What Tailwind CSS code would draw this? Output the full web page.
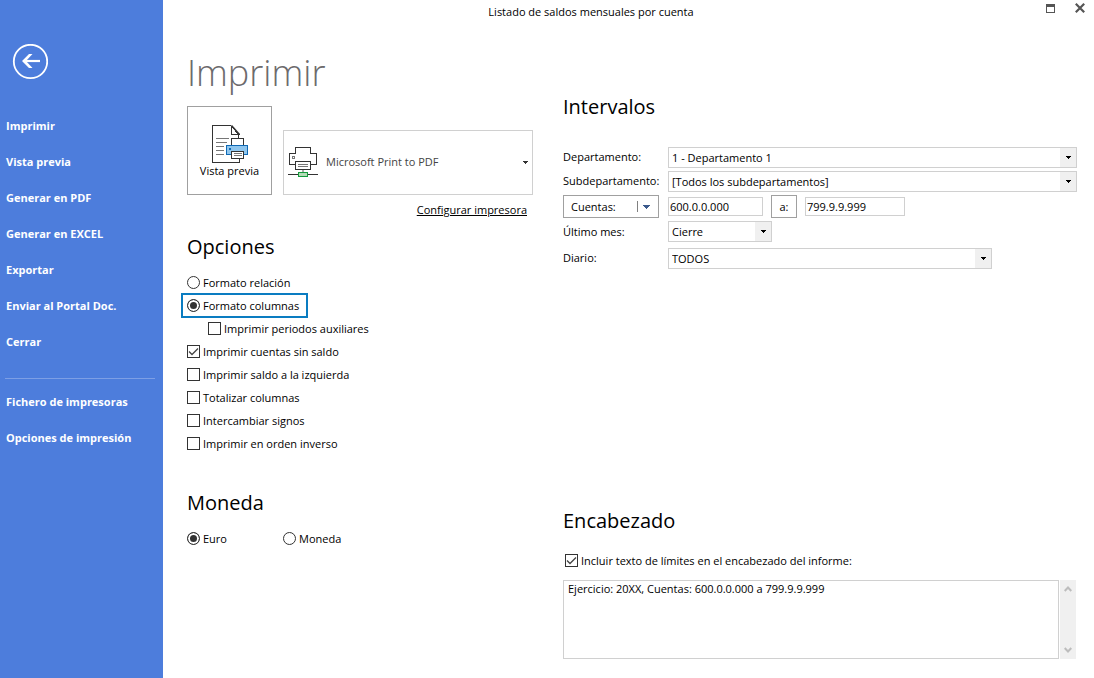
<!DOCTYPE html>
<html lang="es">
<head>
<meta charset="utf-8">
<meta name="viewport" content="width=device-width, initial-scale=1">
<title>Listado de saldos mensuales por cuenta</title>
<script src="https://cdn.jsdelivr.net/npm/@tailwindcss/browser@4"></script>
</head>
<body class="flex min-h-screen bg-white font-['Open_Sans','Noto_Sans',sans-serif] text-[11px] leading-4 text-black">

<aside class="flex w-[163px] shrink-0 flex-col bg-[#4d7ddc] pt-11 text-[11px] font-bold text-white">
  <button type="button" aria-label="Volver" class="ml-3 size-9">
    <svg viewBox="0 0 36 36" class="size-9" fill="none" stroke="#fff">
      <circle cx="18.500" cy="17.500" r="16.700" stroke-width="1.800"/>
      <path d="M28 17H12" stroke-width="2.200"/>
      <path d="M10 17L17 10h3.500L14 17l6.500 7H17z" fill="#fff" stroke="none"/>
    </svg>
  </button>
  <nav class="flex flex-col pt-[38px]">
    <a href="#" class="px-1.5">Imprimir</a>
    <a href="#" class="mt-5 px-1.5">Vista previa</a>
    <a href="#" class="mt-5 px-1.5">Generar en PDF</a>
    <a href="#" class="mt-5 px-1.5">Generar en EXCEL</a>
    <a href="#" class="mt-5 px-1.5">Exportar</a>
    <a href="#" class="mt-5 px-1.5">Enviar al Portal Doc.</a>
    <a href="#" class="mt-5 px-1.5">Cerrar</a>
    <hr class="mt-7 mr-2 ml-[5px] border-[#7d9fe5]">
    <a href="#" class="mt-[15px] px-1.5">Fichero de impresoras</a>
    <a href="#" class="mt-5 px-1.5">Opciones de impresión</a>
  </nav>
</aside>

<div class="flex min-w-0 flex-1 flex-col">
  <header class="flex h-6 items-center">
    <h1 class="flex-1 text-center">Listado de saldos mensuales por cuenta</h1>
    <div class="flex w-[75px] justify-end gap-5 pr-[9px] pb-2">
      <button type="button" aria-label="Maximizar" class="pt-px"><svg class="h-[9px] w-[9px]" viewBox="0 0 9 9" shape-rendering="crispEdges"><path d="M.5.500h8v8h-8z" fill="#fff" stroke="#555"/><path d="M0 0h9v3H0z" fill="#555"/></svg></button>
      <button type="button" aria-label="Cerrar ventana"><svg class="size-[10px]" viewBox="0 0 10 10"><path d="M.8.800l8.400 8.400M9.200.800L.8 9.200" stroke="#555" stroke-width="2.200"/></svg></button>
    </div>
  </header>

  <main class="flex flex-1 gap-[30px] pr-[17px] pl-6">
    <div class="flex w-[346px] shrink-0 flex-col">
      <h2 class="pt-[25px] text-4xl leading-[48px] font-light text-[#6c6a6c]">Imprimir</h2>

      <div class="mt-[9px] flex items-end gap-[11px]">
        <button type="button" class="flex h-[89px] w-[85px] flex-col items-center border border-[#a0a0a0] pt-[18px]">
          <svg class="ml-px h-[38px] w-[36px]" viewBox="1 0 36 38" fill="none" shape-rendering="crispEdges">
            <path d="M28.500 37.500H1.500V.500h18l8 8.500v4M28.500 34v3.500" fill="#fff" stroke="#333"/>
            <path d="M20.500.500V9.500h8" stroke="#333"/>
            <path d="M20.500.500l8 9" stroke="#333" stroke-width="1.500" shape-rendering="auto"/>
            <path d="M5 13.500h13M5 17.500h11M5 21.500h8M5 25.500h8M5 29.500h8" stroke="#767676"/>
            <path d="M20.500 20.500v-7h12v7" fill="#fff" stroke="#333"/>
            <path d="M15.500 20.500h21v9h-21z" fill="#8fc6ee" stroke="#0f69b5"/>
            <path d="M18 23h2v2h-2z" fill="#0f69b5"/>
            <path d="M20.500 26.500h12v7h-12z" fill="#fff" stroke="#333"/>
            <path d="M23 28.500h8M23 30.500h8" stroke="#767676"/>
          </svg>
          <span>Vista previa</span>
        </button>
        <div class="relative h-[65px] w-[250px]">
          <select aria-label="Impresora" class="size-full appearance-none border border-[#d0d0d0] bg-white pr-5 pb-px pl-[42px] text-[#444]">
            <option>Microsoft Print to PDF</option>
          </select>
          <svg class="pointer-events-none absolute top-4 left-[5px] h-[31px] w-[30px]" viewBox="0 0 30 31" fill="none" shape-rendering="crispEdges">
            <path d="M1.500 7.500h27v11h-27z" fill="#fff" stroke="#333"/>
            <path d="M7.500 7.500v-6h15v6" fill="#fff" stroke="#333"/>
            <path d="M4.500 10.500h2v2h-2z" stroke="#767676"/>
            <path d="M7.500 15.500h15v8h-15z" fill="#fff" stroke="#333"/>
            <path d="M10 18.500h10M10 20.500h10" stroke="#767676"/>
            <path d="M15 24v3" stroke="#aaa" stroke-width="2"/>
            <path d="M0 28.500h30" stroke="#333"/>
            <path d="M10.500 26.500h9v4h-9z" fill="#b5dcb8" stroke="#149a3c"/>
          </svg>
          <svg class="pointer-events-none absolute top-[31px] right-[5px] h-[3px] w-[5px]" viewBox="0 0 5 3" shape-rendering="crispEdges"><path d="M0 0h5v1H0zM1 1h3v1H1zM2 2h1v1H2z" fill="#333"/></svg>
        </div>
      </div>
      <a href="#" class="mt-[7px] mr-1.5 self-end underline">Configurar impresora</a>

      <section aria-labelledby="opciones">
        <h3 id="opciones" class="mt-[15px] text-xl leading-7">Opciones</h3>
        <div class="mt-[10px] flex flex-col">
          <label class="flex h-[23px] items-center gap-[3px]"><input type="radio" name="formato" class="size-[13px] appearance-none rounded-full border border-[#333] checked:bg-[#333] checked:shadow-[inset_0_0_0_2px_white]">Formato relación</label>
          <label class="-my-px -ml-1.5 flex h-[25px] w-[127px] items-center gap-[3px] border-2 border-[#0a7cc1] pl-1 whitespace-nowrap"><input type="radio" name="formato" checked class="size-[13px] appearance-none rounded-full border border-[#333] checked:bg-[#333] checked:shadow-[inset_0_0_0_2px_white]">Formato columnas</label>
          <label class="ml-[21px] flex h-[23px] items-center gap-[3px]"><input type="checkbox" class="size-[13px] appearance-none border border-[#333]">Imprimir periodos auxiliares</label>
          <label class="flex h-[23px] items-center gap-[3px]"><span class="grid size-[13px]"><input type="checkbox" checked class="peer size-[13px] appearance-none border border-[#333] [grid-area:1/1]"><svg class="pointer-events-none invisible size-[13px] [grid-area:1/1] peer-checked:visible" viewBox="0 0 13 13" fill="none"><path d="M2 6.500l3 3L11 3.500" stroke="#444" stroke-width="1.300"/></svg></span>Imprimir cuentas sin saldo</label>
          <label class="flex h-[23px] items-center gap-[3px]"><input type="checkbox" class="size-[13px] appearance-none border border-[#333]">Imprimir saldo a la izquierda</label>
          <label class="flex h-[23px] items-center gap-[3px]"><input type="checkbox" class="size-[13px] appearance-none border border-[#333]">Totalizar columnas</label>
          <label class="flex h-[23px] items-center gap-[3px]"><input type="checkbox" class="size-[13px] appearance-none border border-[#333]">Intercambiar signos</label>
          <label class="flex h-[23px] items-center gap-[3px]"><input type="checkbox" class="size-[13px] appearance-none border border-[#333]">Imprimir en orden inverso</label>
        </div>
      </section>

      <section aria-labelledby="moneda">
        <h3 id="moneda" class="mt-[34px] text-xl leading-7">Moneda</h3>
        <div class="mt-[10px] flex">
          <label class="flex h-[23px] w-24 items-center gap-[3px]"><input type="radio" name="moneda" checked class="size-[13px] appearance-none rounded-full border border-[#333] checked:bg-[#333] checked:shadow-[inset_0_0_0_2px_white]">Euro</label>
          <label class="flex h-[23px] items-center gap-[3px]"><input type="radio" name="moneda" class="size-[13px] appearance-none rounded-full border border-[#333] checked:bg-[#333] checked:shadow-[inset_0_0_0_2px_white]">Moneda</label>
        </div>
      </section>
    </div>

    <div class="flex min-w-0 flex-1 flex-col">
      <section aria-labelledby="intervalos">
        <h3 id="intervalos" class="mt-[69px] text-xl leading-7">Intervalos</h3>
        <div class="mt-[26px] flex flex-col gap-[3px]">
          <div class="flex items-center">
            <label for="dep" class="w-[105px] shrink-0 pb-0.5">Departamento:</label>
            <div class="relative h-[21px] min-w-0 flex-1">
              <select id="dep" class="size-full appearance-none border border-[#d0d0d0] bg-white pl-[3px]"><option>1 - Departamento 1</option></select>
              <span class="pointer-events-none absolute inset-y-px right-px grid w-4 place-items-center bg-[#f0f0f0]"><svg class="h-[3px] w-[5px]" viewBox="0 0 5 3" shape-rendering="crispEdges"><path d="M0 0h5v1H0zM1 1h3v1H1zM2 2h1v1H2z"/></svg></span>
            </div>
          </div>
          <div class="flex items-center">
            <label for="sub" class="w-[105px] shrink-0 pb-0.5 whitespace-nowrap">Subdepartamento:</label>
            <div class="relative h-[21px] min-w-0 flex-1">
              <select id="sub" class="size-full appearance-none border border-[#d0d0d0] bg-white pl-[3px]"><option>[Todos los subdepartamentos]</option></select>
              <span class="pointer-events-none absolute inset-y-px right-px grid w-4 place-items-center bg-[#f0f0f0]"><svg class="h-[3px] w-[5px]" viewBox="0 0 5 3" shape-rendering="crispEdges"><path d="M0 0h5v1H0zM1 1h3v1H1zM2 2h1v1H2z"/></svg></span>
            </div>
          </div>
          <div class="flex items-center">
            <button type="button" class="mr-[9px] flex h-[23px] w-24 items-center border border-[#a0a0a0] pr-2 pl-[7px]">Cuentas:
              <span class="ml-auto h-[11px] w-px bg-[#808080]"></span>
              <svg class="ml-[5px] h-1 w-[7px]" viewBox="0 0 7 4" shape-rendering="crispEdges"><path d="M0 0h7v1H0zM1 1h5v1H1zM2 2h3v1H2zM3 3h1v1H3z" fill="#3c5a8c"/></svg>
            </button>
            <input type="text" aria-label="Cuenta inicial" value="600.0.0.000" class="h-[19px] w-[95px] border border-[#d0d0d0] px-px">
            <button type="button" class="mx-2 h-[23px] w-[26px] border border-[#a0a0a0]">a:</button>
            <input type="text" aria-label="Cuenta final" value="799.9.9.999" class="h-[19px] w-[100px] border border-[#d0d0d0] px-px">
          </div>
          <div class="flex items-center">
            <label for="mes" class="w-[105px] shrink-0">Último mes:</label>
            <div class="relative h-[21px] w-[104px]">
              <select id="mes" class="size-full appearance-none border border-[#d0d0d0] bg-white pl-[3px]"><option>Cierre</option></select>
              <span class="pointer-events-none absolute inset-y-px right-px grid w-4 place-items-center bg-[#f0f0f0]"><svg class="h-[3px] w-[5px]" viewBox="0 0 5 3" shape-rendering="crispEdges"><path d="M0 0h5v1H0zM1 1h3v1H1zM2 2h1v1H2z"/></svg></span>
            </div>
          </div>
          <div class="mt-[3px] flex items-center">
            <label for="diario" class="w-[105px] shrink-0 pb-0.5">Diario:</label>
            <div class="relative h-[21px] w-[324px]">
              <select id="diario" class="size-full appearance-none border border-[#d0d0d0] bg-white pl-[3px]"><option>TODOS</option></select>
              <span class="pointer-events-none absolute inset-y-px right-px grid w-4 place-items-center bg-[#f0f0f0]"><svg class="h-[3px] w-[5px]" viewBox="0 0 5 3" shape-rendering="crispEdges"><path d="M0 0h5v1H0zM1 1h3v1H1zM2 2h1v1H2z"/></svg></span>
            </div>
          </div>
        </div>
      </section>

      <section aria-labelledby="encabezado" class="mt-auto pb-[19px]">
        <h3 id="encabezado" class="text-xl leading-7">Encabezado</h3>
        <label class="mt-[14px] ml-0.5 flex h-[23px] items-center gap-[3px]"><span class="grid size-[13px]"><input type="checkbox" checked class="peer size-[13px] appearance-none border border-[#333] [grid-area:1/1]"><svg class="pointer-events-none invisible size-[13px] [grid-area:1/1] peer-checked:visible" viewBox="0 0 13 13" fill="none"><path d="M2 6.500l3 3L11 3.500" stroke="#444" stroke-width="1.300"/></svg></span>Incluir texto de límites en el encabezado del informe:</label>
        <div class="mt-2 flex h-[79px] gap-px pr-px">
          <textarea aria-label="Texto del encabezado" class="min-w-0 flex-1 resize-none overflow-hidden border border-[#d0d0d0] px-1">Ejercicio: 20XX, Cuentas: 600.0.0.000 a 799.9.9.999</textarea>
          <div class="flex w-4 flex-col items-center justify-between bg-[#f0f0f0] py-1.5">
            <svg class="h-[6px] w-[8px]" viewBox="0 0 8 6" fill="none"><path d="M.7 5L4 1.500 7.300 5" stroke="#bdbdbd" stroke-width="2"/></svg>
            <svg class="h-[6px] w-[8px]" viewBox="0 0 8 6" fill="none"><path d="M.7 1L4 4.500 7.300 1" stroke="#bdbdbd" stroke-width="2"/></svg>
          </div>
        </div>
      </section>
    </div>
  </main>
</div>
</body>
</html>
